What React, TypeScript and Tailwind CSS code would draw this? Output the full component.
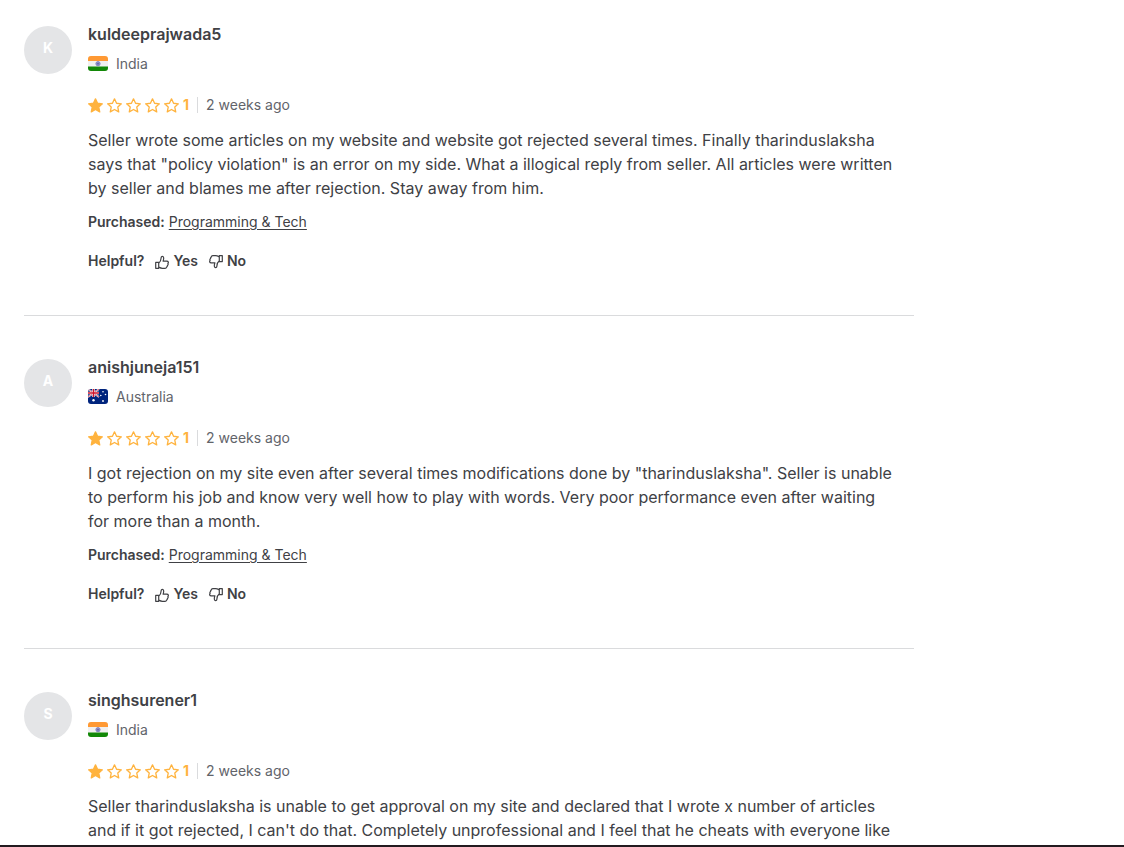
import React from 'react';

type Country = 'India' | 'Australia';

interface Review {
  user: string;
  country: Country;
  rating: number;
  date: string;
  text: string;
  category?: string;
}

const reviews: Review[] = [
  {
    user: 'kuldeeprajwada5',
    country: 'India',
    rating: 1,
    date: '2 weeks ago',
    text: `Seller wrote some articles on my website and website got rejected several times. Finally tharinduslaksha
says that "policy violation" is an error on my side. What a illogical reply from seller. All articles were written
by seller and blames me after rejection. Stay away from him.`,
    category: 'Programming & Tech',
  },
  {
    user: 'anishjuneja151',
    country: 'Australia',
    rating: 1,
    date: '2 weeks ago',
    text: `I got rejection on my site even after several times modifications done by "tharinduslaksha". Seller is unable
to perform his job and know very well how to play with words. Very poor performance even after waiting
for more than a month.`,
    category: 'Programming & Tech',
  },
  {
    user: 'singhsurener1',
    country: 'India',
    rating: 1,
    date: '2 weeks ago',
    text: `Seller tharinduslaksha is unable to get approval on my site and declared that I wrote x number of articles
and if it got rejected, I can't do that. Completely unprofessional and I feel that he cheats with everyone like`,
  },
];

const STAR =
  'M8 0.9l2.2 4.7 5.1.6-3.8 3.5 1 5.1L8 12.3l-4.5 2.5 1-5.1L.7 6.2l5.1-.6z';

const Flag: React.FC<{ country: Country }> = ({ country }) =>
  country === 'India' ? (
    <svg className="mb-px h-[15px] w-5 rounded-[3px]" viewBox="0 0 20 15" aria-hidden="true">
      <path fill="#f0f0f0" d="M0 0h20v15H0z" />
      <path fill="#ff9933" d="M0 0h20v5H0z" />
      <path fill="#128807" d="M0 10.5h20V15H0z" />
      <circle cx="10" cy="7.7" r="2.1" fill="#8f8fc6" stroke="#8484c0" />
      <circle cx="10" cy="7.7" r=".7" fill="#4a4a9c" />
    </svg>
  ) : (
    <svg className="mb-px h-[15px] w-5 rounded-[3px]" viewBox="0 0 20 15" aria-hidden="true">
      <path fill="#00247d" d="M0 0h20v15H0z" />
      <path stroke="#fff" strokeWidth="1.6" d="M0 0l11 8M11 0L0 8" />
      <path stroke="#cf142b" strokeWidth=".7" d="M0 0l11 8M11 0L0 8" />
      <path stroke="#fff" strokeWidth="2.6" d="M5.5 0v8M0 4h11" />
      <path stroke="#cf142b" strokeWidth="1.5" d="M5.5 0v8M0 4h11" />
      <g fill="#fff">
        <circle cx="5.5" cy="11.3" r="1.2" />
        <circle cx="15" cy="2.8" r=".8" />
        <circle cx="12.8" cy="6.5" r=".8" />
        <circle cx="17.5" cy="5.5" r=".8" />
        <circle cx="15" cy="12" r=".9" />
      </g>
    </svg>
  );

const Stars: React.FC<{ rating: number }> = ({ rating }) => (
  <div className="flex gap-1" role="img" aria-label={`${rating} out of 5`}>
    {[1, 2, 3, 4, 5].map((n) => (
      <svg key={n} className="size-[15px]" viewBox="0 0 16 16">
        <path
          d={STAR}
          fill={n <= rating ? '#ffb33e' : 'none'}
          stroke="#ffb33e"
          strokeWidth="1.4"
          strokeLinejoin="round"
        />
      </svg>
    ))}
  </div>
);

const Thumb: React.FC<{ down?: boolean }> = ({ down }) => (
  <svg
    className={down ? 'mt-0.5 size-[14px] rotate-180' : 'mt-0.5 size-[14px]'}
    viewBox="0 0 14 14"
    fill="none"
    stroke="#404145"
    strokeWidth="1.2"
    strokeLinejoin="round"
    aria-hidden="true"
  >
    <path d="M.7 7.4h3v5.9h-3zM3.7 8.2C5.4 6.9 6 5.3 6.1 2.9c.1-2.1 2.6-1.8 2.6.2 0 1.1-.2 2-.6 3h3.7c1.7 0 1.9 1.6 1.1 2.4.4.8.2 1.5-.5 2 .1.8-.2 1.3-.8 1.6 0 .8-.6 1.2-1.4 1.2H7.4c-1.5 0-2.4-.5-3.7-1.2" />
  </svg>
);

const ReviewItem: React.FC<{ review: Review }> = ({ review }) => (
  <li className="flex gap-4 border-b border-[#dadbdd] pt-[39px] pb-[42px] first:pt-[22px] last:border-b-0">
    <div className="mt-1 flex size-12 shrink-0 items-center justify-center rounded-full bg-[#e4e5e7] pb-1 text-sm font-bold text-white">
      {review.user[0].toUpperCase()}
    </div>
    <div className="min-w-0 flex-1">
      <h2 className="text-base leading-6 font-semibold">{review.user}</h2>
      <div className="mt-1.5 flex items-center gap-2 text-sm leading-6 text-[#62646a]">
        <Flag country={review.country} />
        <span>{review.country}</span>
      </div>
      <div className="mt-[17px] flex items-center text-sm leading-6 text-[#62646a]">
        <Stars rating={review.rating} />
        <span className="ml-1 font-bold text-[#ffb33e]">{review.rating}</span>
        <span className="mx-2 h-4 w-px bg-[#dadbdd]" />
        <span>{review.date}</span>
      </div>
      <p className="mt-[11px] text-base leading-6 md:whitespace-pre-line">{review.text}</p>
      {review.category && (
        <>
          <p className="mt-2.5 text-sm leading-6">
            <span className="font-semibold">Purchased:</span>{' '}
            <a href="#programming-tech" className="underline underline-offset-2">
              {review.category}
            </a>
          </p>
          <div className="mt-[15px] flex items-center gap-[11px] text-sm leading-6 font-semibold">
            <span>Helpful?</span>
            <button type="button" className="flex items-center gap-1">
              <Thumb /> Yes
            </button>
            <button type="button" className="flex items-center gap-1">
              <Thumb down /> No
            </button>
          </div>
        </>
      )}
    </div>
  </li>
);

export default function App() {
  return (
    <main className="h-screen overflow-hidden border-b-2 border-[#231a20] bg-white px-6 font-['Inter',sans-serif] text-[#404145]">
      <ul className="max-w-[890px]">
        {reviews.map((review) => (
          <ReviewItem key={review.user} review={review} />
        ))}
      </ul>
    </main>
  );
}
